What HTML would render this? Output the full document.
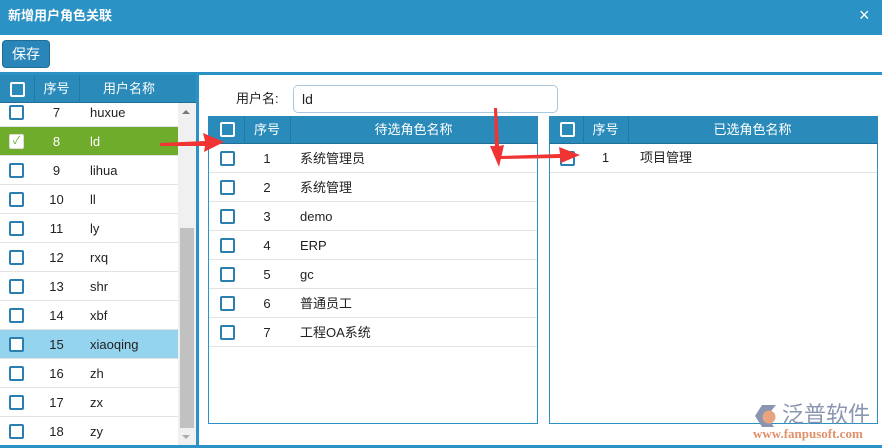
<!DOCTYPE html><html><head><meta charset="utf-8"><style>
*{margin:0;padding:0;box-sizing:border-box}
body{width:882px;height:448px;position:relative;overflow:hidden;background:#fff;font-family:"Liberation Sans","Noto Sans CJK SC",sans-serif;font-size:13px;color:#222}
.a{position:absolute}
.cb{position:absolute;width:15px;height:15px;border:2px solid #2a7fb0;border-radius:2px;background:#fff}
.hcb{position:absolute;width:15px;height:15px;border:2px solid #fff;border-radius:2px}
.hd{background:#2a8bbb;color:#fff;border-bottom:1px solid #1f6f99}
.row{position:absolute;height:29px;border-bottom:1px solid #e3e3e3}
.t{position:absolute;line-height:29px}
.ht{position:absolute;line-height:27px;text-align:center;color:#fff}
</style></head><body>
<div class="a" style="left:0;top:0;width:882px;height:35px;background:#2a92c4"></div>
<div class="a" style="left:8px;top:7px;line-height:18px;color:#fff;font-weight:bold;font-size:13px">新增用户角色关联</div>
<div class="a" style="left:859px;top:5px;line-height:20px;color:#fff;font-size:18px">×</div>
<div class="a" style="left:2px;top:40px;width:48px;height:28px;background:#2a86b8;border:1px solid #1f6f99;border-radius:4px;color:#fff;line-height:26px;text-align:center;font-size:14px">保存</div>
<div class="a" style="left:0;top:72px;width:882px;height:3px;background:#2a92c4"></div>
<div class="a" style="left:196px;top:72px;width:3px;height:376px;background:#2a92c4"></div>
<div class="a" style="left:0;top:445px;width:882px;height:3px;background:#2a92c4"></div>
<!-- left header -->
<div class="a hd" style="left:0;top:75px;width:196px;height:28px"></div>
<div class="hcb" style="left:10px;top:82px"></div>
<div class="a" style="left:34px;top:75px;width:1px;height:28px;background:#1f7aa8"></div>
<div class="a" style="left:79px;top:75px;width:1px;height:28px;background:#1f7aa8"></div>
<div class="ht" style="left:34px;top:75px;width:45px">序号</div>
<div class="ht" style="left:79px;top:75px;width:100px">用户名称</div>
<div class="a" style="left:0;top:103px;width:178px;height:342px;overflow:hidden">
<div id="lr" style="position:absolute;left:0;top:-5px;width:178px"></div>
</div>
<div class="a" style="left:178px;top:103px;width:18px;height:342px;background:#f0f0f0"></div>
<div class="a" style="left:180px;top:228px;width:14px;height:200px;background:#c1c1c1"></div>
<div class="a" style="left:182px;top:110px;width:0;height:0;border-left:4px solid transparent;border-right:4px solid transparent;border-bottom:4px solid #777"></div>
<div class="a" style="left:182px;top:435px;width:0;height:0;border-left:4px solid transparent;border-right:4px solid transparent;border-top:4px solid #aaa"></div>
<!-- user name -->
<div class="a" style="left:236px;top:90px;line-height:18px">用户名:</div>
<div class="a" style="left:293px;top:85px;width:265px;height:28px;border:1px solid #aac8dd;border-radius:5px;padding-left:8px;line-height:26px;font-size:14px">ld</div>
<!-- middle grid -->
<div class="a" style="left:208px;top:116px;width:330px;height:308px;border:1px solid #2a92c4"></div>
<div class="a hd" style="left:208px;top:116px;width:330px;height:28px"></div>
<div class="hcb" style="left:220px;top:122px"></div>
<div class="a" style="left:244px;top:116px;width:1px;height:28px;background:#1f7aa8"></div>
<div class="a" style="left:290px;top:116px;width:1px;height:28px;background:#1f7aa8"></div>
<div class="ht" style="left:244px;top:116px;width:46px">序号</div>
<div class="ht" style="left:290px;top:116px;width:247px">待选角色名称</div>
<div id="mr"></div>
<!-- right grid -->
<div class="a" style="left:549px;top:116px;width:329px;height:308px;border:1px solid #2a92c4"></div>
<div class="a hd" style="left:549px;top:116px;width:329px;height:28px"></div>
<div class="hcb" style="left:560px;top:122px"></div>
<div class="a" style="left:583px;top:116px;width:1px;height:28px;background:#1f7aa8"></div>
<div class="a" style="left:628px;top:116px;width:1px;height:28px;background:#1f7aa8"></div>
<div class="ht" style="left:583px;top:116px;width:45px">序号</div>
<div class="ht" style="left:628px;top:116px;width:249px">已选角色名称</div>
<div class="row" style="left:550px;top:144px;width:327px"></div>
<div class="cb" style="left:560px;top:151px"></div>
<div class="t" style="left:583px;top:143px;width:45px;text-align:center">1</div>
<div class="t" style="left:640px;top:143px">项目管理</div>
<!-- logo -->
<svg class="a" style="left:754px;top:404px" width="26" height="24" viewBox="0 0 26 24"><path d="M1 12 L8 1 L22 1 L13 12 L20 23 L8 23Z" fill="#8a96b0"/><circle cx="15" cy="13" r="6.5" fill="#e8a47e"/></svg>
<div class="a" style="left:782px;top:403px;line-height:24px;font-size:22px;color:#8a96b0">泛普软件</div>
<div class="a" style="left:753px;top:427px;line-height:14px;font-size:13px;color:#e0906a;font-family:'Liberation Serif',serif;font-weight:bold">www.fanpusoft.com</div>
<!-- arrows -->
<svg class="a" style="left:0;top:0" width="882" height="448">
<g fill="#f03434">
<polygon points="160,143 205,141 203,133 224,142 204,152 205,146 160,146"/>
<polygon points="494,108 497,108 499,146 504,145 499,167 490,146 495,146"/>
<polygon points="500,156 560,154 559,147 580,155 561,163 560,158 500,159"/>
</g></svg>
<script>
var L=[[7,'huxue'],[8,'ld'],[9,'lihua'],[10,'ll'],[11,'ly'],[12,'rxq'],[13,'shr'],[14,'xbf'],[15,'xiaoqing'],[16,'zh'],[17,'zx'],[18,'zy']];
var h='';L.forEach(function(r,i){var bg=r[0]==8?'#6fac2c':r[0]==15?'#95d4ef':'#fff';var c=r[0]==8?'#fff':'#222';
h+='<div class="row" style="left:0;top:'+(i*29)+'px;width:178px;background:'+bg+';color:'+c+'">'+(r[0]==8?'<div class="cb" style="left:9px;top:7px;border-color:#ddd;border-width:1px;color:#6fac2c;font-size:11px;line-height:13px;text-align:center">✓</div>':'<div class="cb" style="left:9px;top:7px"></div>')+'<div class="t" style="left:34px;width:45px;text-align:center;top:0">'+r[0]+'</div><div class="t" style="left:90px;top:0">'+r[1]+'</div></div>'});
document.getElementById('lr').innerHTML=h;
var M=['系统管理员','系统管理','demo','ERP','gc','普通员工','工程OA系统'];h='';
M.forEach(function(n,i){var y=144+i*29;h+='<div class="row" style="left:209px;top:'+y+'px;width:328px"></div><div class="cb" style="left:220px;top:'+(y+7)+'px"></div><div class="t" style="left:244px;top:'+(y)+'px;width:46px;text-align:center">'+(i+1)+'</div><div class="t" style="left:300px;top:'+(y)+'px">'+n+'</div>'});
document.getElementById('mr').innerHTML=h;
</script>
</body></html>
